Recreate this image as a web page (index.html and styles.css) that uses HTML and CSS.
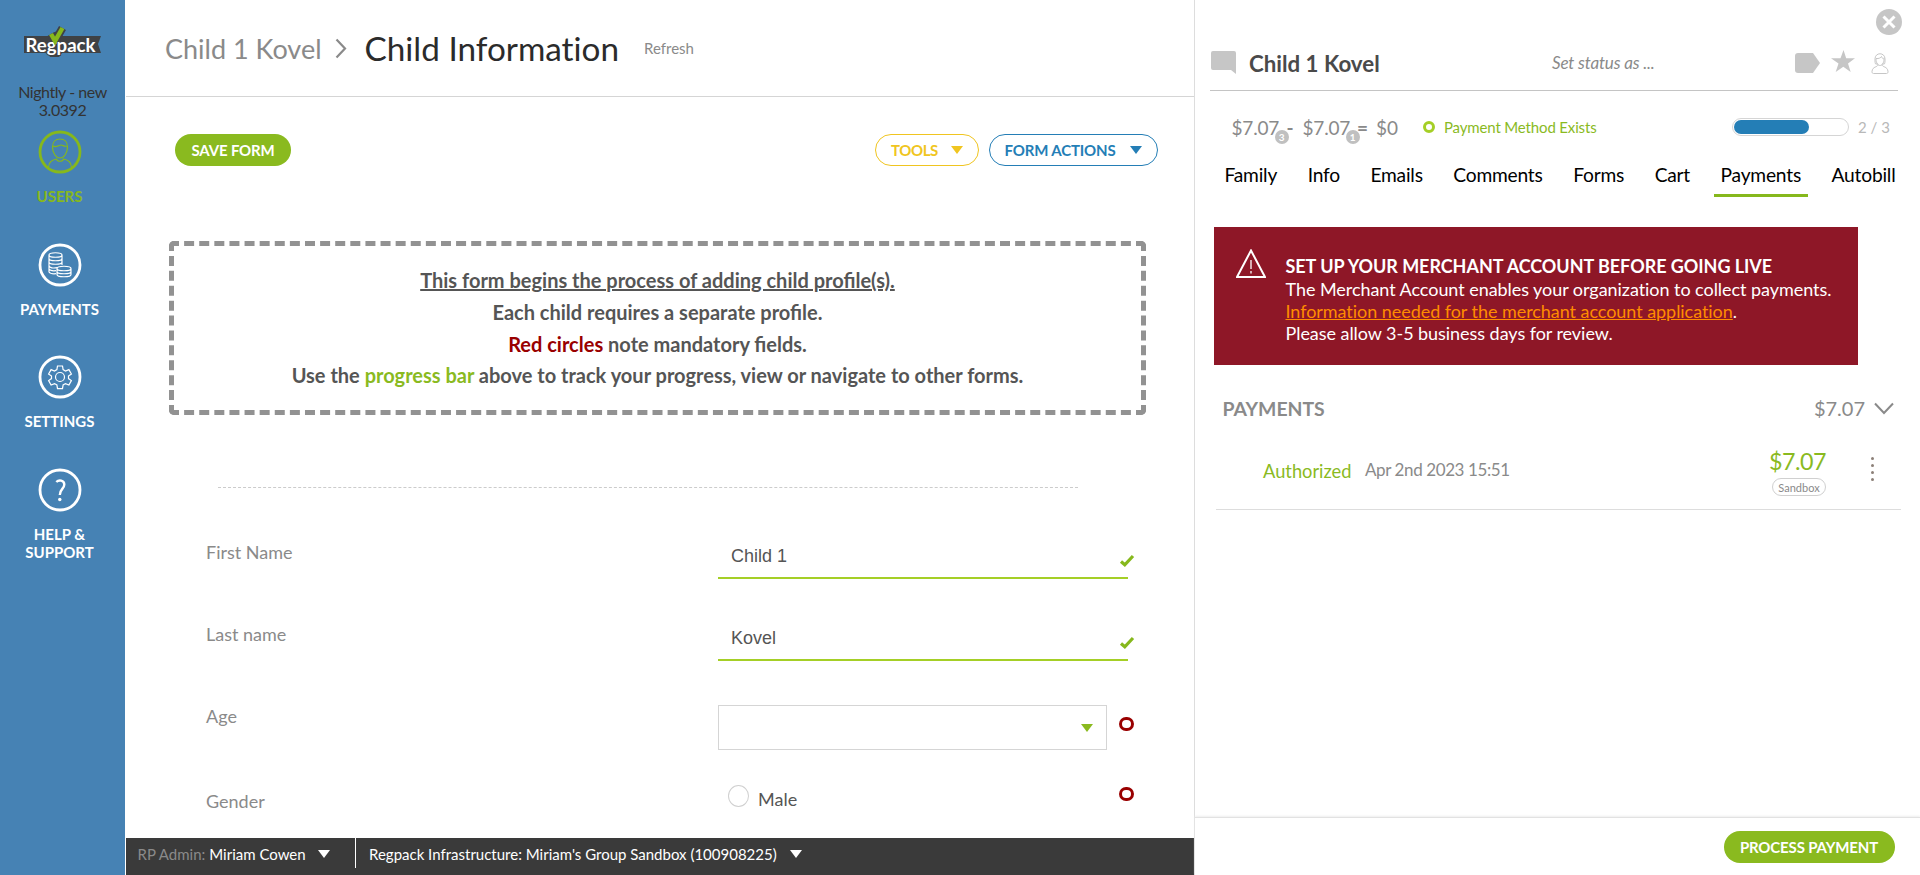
FILE: index.html
```html
<!DOCTYPE html>
<html lang="en">
<head>
<meta charset="utf-8">
<title>Child Information</title>
<link rel="stylesheet" href="styles.css">
</head>
<body>
<div class="app">
  <nav class="sidebar">
    <svg class="logo" width="80" height="34" viewBox="0 0 80 34">
      <path class="logo-plate" d="M0 12h24l14-8 3 2-3 6h39l-3 8 3 9H38l-3 4h-9l-2-4H0z"/>
      <path class="logo-check-edge" d="M27 10l4 7 7.500-13"/>
      <text class="logo-text" x="1.500" y="27.500" textLength="70" lengthAdjust="spacingAndGlyphs">Regpack</text>
      <path class="logo-check" d="M27 10l4 7 7.500-13"/>
    </svg>
    <p class="version">Nightly - new<br>3.0392</p>
    <ul class="nav">
      <li class="nav-item active">
        <svg width="44" height="44" viewBox="0 0 44 44"><circle class="ring" cx="22" cy="22" r="20"/><path d="M14.500 17c0-5 3-8 7.500-8s7.500 3 7.500 8c0 6-3.500 11-7.500 11s-7.500-5-7.500-11zM15 16c3 2 6-1 8-1s3 2 6 1M10.500 38c0-5 2-8 8-9 1 3 6 3 7 0 6 1 8 4 8 9"/></svg>
        <span>USERS</span>
      </li>
      <li class="nav-item">
        <svg width="44" height="44" viewBox="0 0 44 44"><circle class="ring" cx="22" cy="22" r="20"/><path d="M11 12c0-3 13-3 13 0s-13 3-13 0zM11 12v17c1 1.500 4 2 7 1.700M24 12v10M11 15.500c0 3 13 3 13 0M11 19c0 3 13 3 13 0M11 22.500c0 2.500 5 3 8 2M11 26c1 2 4 2 7 1.700M19 25.500c0-3 14-3 14 0s-14 3-14 0zM19 25.500v6c0 3 14 3 14 0v-6M19 28.500c0 3 14 3 14 0"/></svg>
        <span>PAYMENTS</span>
      </li>
      <li class="nav-item">
        <svg width="44" height="44" viewBox="0 0 44 44"><circle class="ring" cx="22" cy="22" r="20"/><circle cx="22" cy="22" r="4.500"/><path d="M19.500 11h5l.6 3.600 2.400 1.400 3.400-1.400 2.500 4.400-2.900 2v2.600l2.900 2-2.500 4.400-3.400-1.400-2.400 1.400-.6 3.600h-5l-.6-3.600-2.400-1.400-3.400 1.400-2.500-4.400 2.900-2V21l-2.900-2 2.500-4.400 3.400 1.400 2.400-1.400z"/></svg>
        <span>SETTINGS</span>
      </li>
      <li class="nav-item">
        <svg width="44" height="44" viewBox="0 0 44 44"><circle class="ring" cx="22" cy="22" r="20"/><path class="mark" d="M18.300 14c2.500-2.500 8-2 8 2.500 0 4.500-4.500 4.500-4.500 10.500"/><circle class="dot" cx="21.800" cy="31.500" r="1.700"/></svg>
        <span>HELP &amp;<br>SUPPORT</span>
      </li>
    </ul>
  </nav>

  <main class="main">
    <header class="page-head">
      <span class="crumb">Child 1 Kovel</span>
      <svg class="crumb-sep" width="12" height="21" viewBox="0 0 12 21"><path d="M1.500 1.500l8.500 9-8.500 9"/></svg>
      <h1 class="title">Child Information</h1>
      <a class="refresh">Refresh</a>
    </header>

    <div class="toolbar">
      <button class="btn save">SAVE FORM</button>
      <button class="btn outline tools">TOOLS<i class="caret"></i></button>
      <button class="btn outline actions">FORM ACTIONS<i class="caret"></i></button>
    </div>

    <section class="notice">
      <p><u>This form begins the process of adding child profile(s).</u></p>
      <p>Each child requires a separate profile.</p>
      <p><span class="red">Red circles</span> note mandatory fields.</p>
      <p>Use the <span class="green">progress bar</span> above to track your progress, view or navigate to other forms.</p>
    </section>

    <div class="dash"></div>

    <form class="form">
      <div class="row">
        <label>First Name</label>
        <div class="field">Child 1</div>
        <svg class="check" width="16" height="13" viewBox="0 0 16 13"><path d="M2 7.500l3.800 3.300L14 2"/></svg>
      </div>
      <div class="row">
        <label>Last name</label>
        <div class="field">Kovel</div>
        <svg class="check" width="16" height="13" viewBox="0 0 16 13"><path d="M2 7.500l3.800 3.300L14 2"/></svg>
      </div>
      <div class="row">
        <label>Age</label>
        <div class="select"><i class="caret"></i></div>
        <i class="required age-req"></i>
      </div>
      <div class="row gender">
        <label>Gender</label>
        <div class="option"><i class="radio"></i><span>Male</span></div>
        <i class="required gender-req"></i>
      </div>
    </form>

    <footer class="status">
      <div class="admin"><span class="muted">RP Admin:</span><span class="who">Miriam Cowen</span><i class="caret"></i></div>
      <div class="group"><span class="groupname">Regpack Infrastructure: Miriam's Group Sandbox (100908225)</span><i class="caret"></i></div>
    </footer>
  </main>

  <aside class="panel">
    <div class="close-row">
      <svg width="26" height="26" viewBox="0 0 26 26"><circle class="fill" cx="13" cy="13" r="13"/><path class="cross" d="M7.500 7.500l11 11M18.500 7.500l-11 11"/></svg>
    </div>
    <div class="person">
      <svg class="comment" width="25" height="23" viewBox="0 0 25 23"><path class="fill" d="M2 0h21a2 2 0 0 1 2 2v21l-5-4H2a2 2 0 0 1-2-2V2a2 2 0 0 1 2-2z"/></svg>
      <h2 class="name">Child 1 Kovel</h2>
      <span class="set-status">Set status as ...</span>
      <svg class="tag" width="25" height="20" viewBox="0 0 25 20"><path class="fill" d="M3 0h15l7 10-7 10H3a3 3 0 0 1-3-3V3a3 3 0 0 1 3-3z"/></svg>
      <svg class="star" width="24" height="22" viewBox="0 0 24 22"><path class="fill" d="M12.500 0l2.700 8.300H24l-7 5.200 2.700 8.500-7.400-5.200L4.700 22l2.800-8.500L0 8.300h9.500z"/></svg>
      <svg class="user" width="18" height="21" viewBox="0 0 18 21"><path d="M4 6c0-7 10-7 10 0 0 3 0 4-.7 5H11M4 6c0 3 0 4 .7 5H7M5 5.500c3 .5 5-1 5.500-2 0 1.500 1.500 2 3 2M5 6c0 4 2 6.500 4 6.500s4-2.500 4-6.500M7 11.500c0 3-5.500 1.500-6 7 0 1.500.5 2 1.500 2h13c1 0 1.500-.5 1.500-2-.5-5.500-6-4-6-7"/></svg>
    </div>

    <div class="balance">
      <span class="sum">$7.07<b class="badge">3</b></span><span class="op minus">-</span>
      <span class="sum">$7.07<b class="badge">1</b></span><span class="op equals">=</span>
      <span class="due">$0</span>
      <i class="ring-dot"></i>
      <span class="method">Payment Method Exists</span>
      <div class="progress"><div class="bar"></div></div>
      <span class="count">2 / 3</span>
    </div>

    <nav class="tabs">
      <a>Family</a><a>Info</a><a>Emails</a><a>Comments</a><a>Forms</a><a>Cart</a><a class="on">Payments</a><a>Autobill</a>
    </nav>

    <section class="alert">
      <svg width="30" height="30" viewBox="0 0 30 30"><path d="M15 1.500L29 28H1z"/><path class="thin" d="M15 11v9M15 22v2.500"/></svg>
      <div class="alert-text">
        <p class="alert-title">SET UP YOUR MERCHANT ACCOUNT BEFORE GOING LIVE</p>
        <p>The Merchant Account enables your organization to collect payments.</p>
        <p><a>Information needed for the merchant account application</a>.</p>
        <p>Please allow 3-5 business days for review.</p>
      </div>
    </section>

    <div class="pay-head">
      <h3>PAYMENTS</h3>
      <span class="total">$7.07</span>
      <svg width="20" height="13" viewBox="0 0 20 13"><path d="M1 1.500l9 9.500 9-9.500"/></svg>
    </div>
    <div class="pay-row">
      <span class="state">Authorized</span>
      <span class="date">Apr 2nd 2023 15:51</span>
      <div class="amount"><span class="value">$7.07</span><span class="pill">Sandbox</span></div>
      <div class="dots"><i></i><i></i><i></i><i></i></div>
    </div>

    <footer class="panel-foot"><button class="btn process">PROCESS PAYMENT</button></footer>
  </aside>
</div>
</body>
</html>
```

FILE: styles.css
```css
* { box-sizing: border-box; }
body { margin: 0; background: #fff; font-family: Lato, "Liberation Sans", sans-serif; color: #8a8a8a; }
p, h1, h2, h3, ul { margin: 0; padding: 0; }
svg { display: block; flex: none; fill: none; }
.app { display: flex; width: 1920px; height: 875px; overflow: hidden; }

.caret { width: 0; height: 0; flex: none; border: 6px solid transparent; border-top: 8px solid currentColor; border-bottom: 0; }
.fill { fill: #c6c6c6; }
.btn { height: 32px; padding: 0; border: 0; border-radius: 16px; background: #8aba1f; color: #fff; font: bold 15px/32px Lato, sans-serif; letter-spacing: -.15px; white-space: nowrap; }

/* Sidebar */
.sidebar { width: 125px; flex: none; background: #4682b4; }
.logo { margin: 24px 0 0 24px; }
.logo-plate { fill: #3f4245; }
.logo-text { fill: #fff; stroke: #3f4245; stroke-width: 2; paint-order: stroke; font: bold 18px Lato, sans-serif; }
.logo-check-edge { stroke: #3f4245; stroke-width: 8; }
.logo-check { stroke: #86b81c; stroke-width: 4.500; }
.version { margin-top: 25px; font-size: 16px; line-height: 18px; letter-spacing: -.45px; color: #333; text-align: center; }
.nav { width: 119px; margin-top: 11px; list-style: none; }
.nav-item { display: flex; flex-direction: column; align-items: center; gap: 13px; height: 112.600px; color: #fff; font-weight: bold; font-size: 15px; line-height: 18px; text-align: center; }
.nav-item.active { color: #86b81c; }
.nav-item svg { stroke: currentColor; stroke-width: 1.200; }
.nav-item .ring { stroke-width: 2.800; }
.nav-item .mark { stroke-width: 2.400; }
.nav-item .dot { fill: #fff; stroke: none; }

/* Main column */
.main { width: 1069px; margin-left: 1px; flex: none; display: flex; flex-direction: column; }
.page-head { display: flex; align-items: center; height: 97px; padding: 0 0 0 39px; border-bottom: 1px solid #d5d5d5; white-space: nowrap; }
.crumb { font-size: 27px; }
.crumb-sep { margin: 0 18px 0 13px; stroke: #8a8a8a; stroke-width: 2.200; }
.title { font-size: 33.300px; font-weight: 400; font-variant-ligatures: none; color: #2b2b2b; }
.refresh { margin-left: 25px; font-size: 15px; }

.toolbar { display: flex; gap: 10px; padding: 37px 37px 0 49px; }
.save { width: 116px; margin-right: auto; }
.outline { display: flex; align-items: center; justify-content: space-between; padding: 0 15px; background: #fff; border: 1px solid currentColor; line-height: 30px; }
.tools { width: 104px; color: #f0c520; letter-spacing: -.4px; }
.actions { width: 169px; padding-left: 14.500px; color: #247eb6; }

.notice { width: 977px; height: 174px; margin: 75px 0 0 43px; padding-top: 19px; border: 5px dashed #929292; border-radius: 5px; font-size: 20px; font-weight: bold; line-height: 31.800px; color: #555; text-align: center; }
.red { color: #990000; }
.green { color: #8aba1f; }
.dash { width: 860px; margin: 72px 0 0 92px; border-top: 1px dashed #ccc; }

.form { flex: 1; padding: 49px 0 0 80px; font-size: 18px; overflow: hidden; }
.row { display: flex; height: 82px; }
.row label { width: 512px; padding-top: 4px; line-height: 22px; }
.field { width: 410px; height: 42px; padding: 7px 13px; border-bottom: 2px solid #a5cf26; font: 18px/24px "Liberation Sans", sans-serif; color: #555; }
.check { margin: 16.500px 0 0 -9px; stroke: #86b81c; stroke-width: 3.200; }
.select { width: 389px; height: 45px; margin-top: 4px; padding: 18px 13px; border: 1px solid #d5d5d5; color: #8aba1f; }
.select .caret { display: block; margin-left: auto; }
.required { width: 15px; height: 14px; border: 3px solid #990000; border-radius: 7px; }
.age-req { margin: 16px 0 0 12px; }
.gender label { padding-top: 7px; }
.option { display: flex; width: 401px; padding: 2px 0 0 10px; color: #555; line-height: 28px; gap: 9px; }
.radio { width: 21px; height: 22px; border: 1px solid #d0d0d0; border-radius: 50%; }
.gender-req { margin-top: 4px; }

.status { display: flex; height: 37px; flex: none; background: #3a3a3a; color: #fff; font-size: 15px; line-height: 32px; white-space: nowrap; }
.status .caret { margin-top: 12px; }
.admin { display: flex; width: 230px; height: 30px; padding-left: 11.500px; border-right: 1px solid #fff; }
.muted { color: #8a8a8a; }
.who { margin: 0 12.500px 0 4px; }
.group { display: flex; padding-left: 13px; gap: 13px; }

/* Detail panel */
.panel { width: 726px; flex: none; display: flex; flex-direction: column; background: #fff; border-left: 1px solid #ddd; margin-left: -1px; white-space: nowrap; }
.close-row { display: flex; justify-content: flex-end; padding: 9px 18px 0 0; }
.cross { stroke: #fff; stroke-width: 3; }
.person { display: flex; align-items: flex-start; width: 688px; height: 56px; margin-left: 15px; border-bottom: 1px solid #c4c4c4; }
.comment { margin: 16px 13px 0 1px; }
.name { width: 303px; margin-top: 14px; font-size: 22.300px; line-height: 30px; color: #4a4a4a; }
.set-status { width: 243px; margin-top: 17px; font-size: 17px; line-height: 22px; letter-spacing: -.15px; font-style: italic; }
.tag { margin: 18px 11px 0 0; }
.star { margin: 15px 16px 0 0; }
.user { margin-top: 18px; stroke: #c6c6c6; }

.balance { display: flex; align-items: center; height: 36px; margin-top: 18px; padding-left: 36.500px; font-size: 19px; }
.sum { position: relative; width: 45px; letter-spacing: -.2px; }
.badge { position: absolute; left: 43px; top: 14px; width: 14px; height: 14px; border-radius: 50%; background: #c0c0c0; color: #fff; font-size: 10px; line-height: 14px; text-align: center; }
.op { font-weight: bold; }
.minus { width: 16px; margin-left: 10px; }
.equals { width: 19px; margin-left: 9.500px; }
.due { width: 47px; }
.ring-dot { width: 12px; height: 12px; margin-right: 9px; border: 3px solid #a5cf26; border-radius: 50%; }
.method { width: 288px; color: #8aba1f; font-size: 15px; letter-spacing: -.15px; }
.progress { width: 117px; height: 18px; margin-right: 9px; padding: 1px; border: 1px solid #d5d5d5; border-radius: 9px; }
.bar { width: 75px; height: 14px; border-radius: 7px; background: #247eb6; }
.count { font-size: 15px; color: #b8b8b8; }

.tabs { display: flex; gap: 16.500px; margin-top: 11px; padding-left: 22.500px; font-size: 19.200px; line-height: 37px; letter-spacing: -.2px; color: #000; }
.tabs a { height: 41px; padding: 0 7px; border-bottom: 3px solid transparent; }
.tabs .on { border-color: #86b81c; }

.alert { display: flex; gap: 19.500px; width: 644px; height: 138px; margin: 30px 0 0 19px; padding: 22px; background: #8e1727; color: #fff; font-size: 18px; line-height: 22px; letter-spacing: -.05px; }
.alert svg { stroke: #fff; stroke-width: 2; }
.alert .thin { stroke-width: 1.300; }
.alert-text { padding-top: 6px; }
.alert-title { font-weight: bold; line-height: 23px; }
.alert a { color: #ff8c00; text-decoration: underline; }

.pay-head { display: flex; align-items: center; height: 30px; margin: 28px 26px 0 27.500px; font-size: 20px; }
.pay-head h3 { margin-right: auto; font-size: 19.400px; }
.pay-head svg { margin-left: 9px; stroke: #8a8a8a; stroke-width: 2; }
.pay-row { display: flex; width: 685px; height: 87px; margin-left: 21px; padding-left: 47px; border-bottom: 1px solid #ddd; }
.state { width: 102px; padding-top: 37px; color: #8aba1f; font-size: 18.300px; line-height: 22px; }
.date { width: 404px; padding-top: 36px; font-size: 17px; line-height: 22px; letter-spacing: -.4px; }
.amount { display: flex; flex-direction: column; align-items: flex-end; width: 57px; padding-top: 23px; }
.value { color: #8aba1f; font-size: 23.300px; line-height: 30px; letter-spacing: -.5px; }
.pill { width: 54px; height: 18px; margin-top: 2px; border: 1px solid #d0d0d0; border-radius: 9px; font-size: 11px; line-height: 17px; text-align: center; }
.dots { display: flex; flex-direction: column; gap: 4px; padding: 34px 0 0 45px; }
.dots i { width: 3px; height: 3px; border-radius: 50%; background: #8c8078; }

.panel-foot { display: flex; justify-content: flex-end; height: 58px; margin-top: auto; padding: 13px 25.500px 0 0; border-top: 1px solid #e2e2e2; box-shadow: 0 -1px 2px #eee; }
.process { width: 171px; }
```
